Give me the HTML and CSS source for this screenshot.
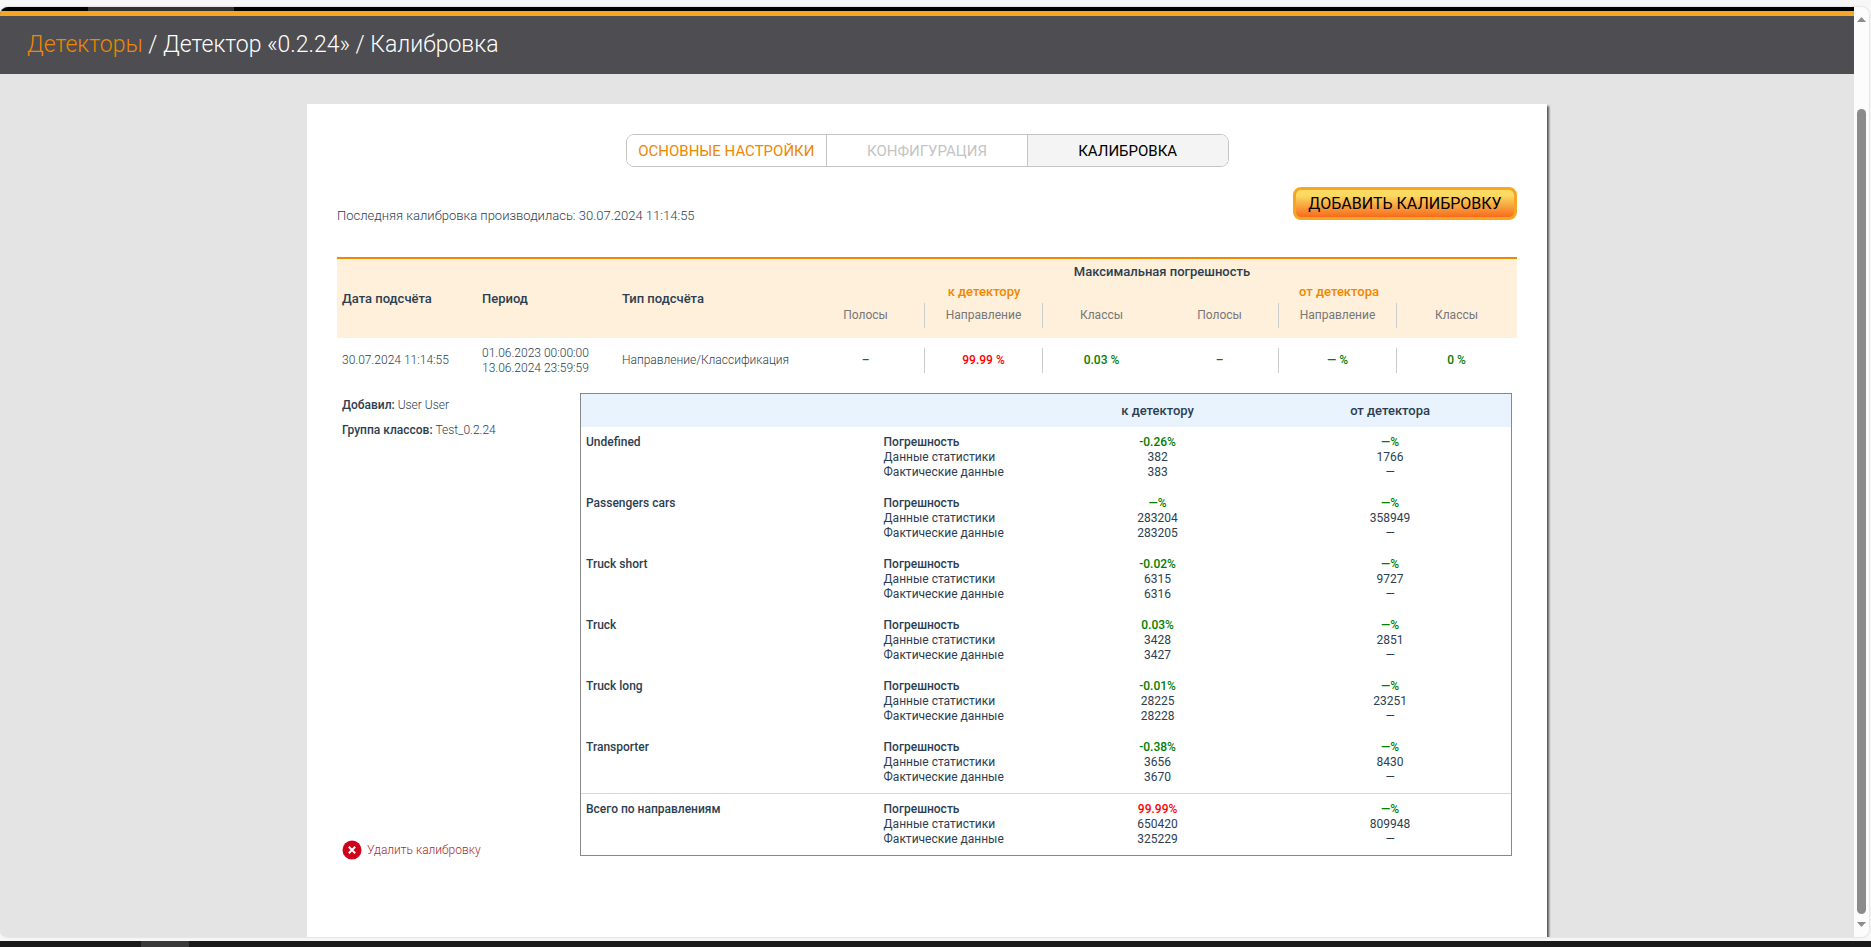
FILE: index.html
```html
<!DOCTYPE html>
<html lang="ru">
<head>
  <meta charset="UTF-8" />
  <title>Калибровка</title>
  <link rel="stylesheet" href="styles.css">
</head>
<body>
  <div class="window">
    <div class="page">
      <div class="menu-strip"><div class="menu-item"></div></div>
      <header class="header">
        <h1><a href="#">Детекторы</a> / Детектор «0.2.24» / Калибровка</h1>
      </header>

      <main class="card">
        <nav class="tabs">
          <button class="tab">Основные настройки</button>
          <button class="tab" disabled>Конфигурация</button>
          <button class="tab active">Калибровка</button>
        </nav>

        <div class="toolbar">
          <p class="last">Последняя калибровка производилась: 30.07.2024 11:14:55</p>
          <button class="btn-add">Добавить калибровку</button>
        </div>

        <table class="summary">
          <colgroup>
            <col class="col-date"><col class="col-date"><col class="col-type">
            <col class="col-err"><col class="col-err"><col class="col-err">
            <col class="col-err"><col class="col-err"><col>
          </colgroup>
          <thead>
            <tr class="row-title">
              <th rowspan="3" class="left">Дата подсчёта</th>
              <th rowspan="3" class="left">Период</th>
              <th rowspan="3" class="left">Тип подсчёта</th>
              <th colspan="6">Максимальная погрешность</th>
            </tr>
            <tr class="row-dir">
              <th colspan="3">к детектору</th>
              <th colspan="3">от детектора</th>
            </tr>
            <tr class="row-sub">
              <th><div class="cell line">Полосы</div></th>
              <th><div class="cell line">Направление</div></th>
              <th><div class="cell">Классы</div></th>
              <th><div class="cell line">Полосы</div></th>
              <th><div class="cell line">Направление</div></th>
              <th><div class="cell">Классы</div></th>
            </tr>
          </thead>
          <tbody>
            <tr>
              <td class="left">30.07.2024 11:14:55</td>
              <td class="left">01.06.2023 00:00:00<br>13.06.2024 23:59:59</td>
              <td class="left">Направление/Классификация</td>
              <td><div class="cell line good">–</div></td>
              <td><div class="cell line bad">99.99 %</div></td>
              <td><div class="cell good">0.03 %</div></td>
              <td><div class="cell line good">–</div></td>
              <td><div class="cell line good">— %</div></td>
              <td><div class="cell good">0 %</div></td>
            </tr>
          </tbody>
        </table>

        <div class="details">
          <div class="info">
            <p><b>Добавил:</b> User User</p>
            <p><b>Группа классов:</b> Test_0.2.24</p>
            <button class="btn-delete">
              <svg width="20" height="20" viewBox="0 0 20 20">
                <circle cx="10" cy="10" r="9.5" fill="#d0021b" />
                <path d="M6.8 6.8 L13.2 13.2 M13.2 6.8 L6.8 13.2" stroke="#fff" stroke-width="2" />
              </svg>
              <span>Удалить калибровку</span>
            </button>
          </div>

          <table class="classes">
            <colgroup>
              <col class="col-name"><col class="col-label"><col class="col-to"><col class="col-from">
            </colgroup>
            <thead>
              <tr><th></th><th></th><th>к детектору</th><th>от детектора</th></tr>
            </thead>
            <tbody>
              <tr>
                <th>Undefined</th>
                <td><b>Погрешность</b><br>Данные статистики<br>Фактические данные</td>
                <td><b class="good">-0.26%</b><br>382<br>383</td>
                <td><b class="good">—%</b><br>1766<br>—</td>
              </tr>
              <tr>
                <th>Passengers cars</th>
                <td><b>Погрешность</b><br>Данные статистики<br>Фактические данные</td>
                <td><b class="good">—%</b><br>283204<br>283205</td>
                <td><b class="good">—%</b><br>358949<br>—</td>
              </tr>
              <tr>
                <th>Truck short</th>
                <td><b>Погрешность</b><br>Данные статистики<br>Фактические данные</td>
                <td><b class="good">-0.02%</b><br>6315<br>6316</td>
                <td><b class="good">—%</b><br>9727<br>—</td>
              </tr>
              <tr>
                <th>Truck</th>
                <td><b>Погрешность</b><br>Данные статистики<br>Фактические данные</td>
                <td><b class="good">0.03%</b><br>3428<br>3427</td>
                <td><b class="good">—%</b><br>2851<br>—</td>
              </tr>
              <tr>
                <th>Truck long</th>
                <td><b>Погрешность</b><br>Данные статистики<br>Фактические данные</td>
                <td><b class="good">-0.01%</b><br>28225<br>28228</td>
                <td><b class="good">—%</b><br>23251<br>—</td>
              </tr>
              <tr>
                <th>Transporter</th>
                <td><b>Погрешность</b><br>Данные статистики<br>Фактические данные</td>
                <td><b class="good">-0.38%</b><br>3656<br>3670</td>
                <td><b class="good">—%</b><br>8430<br>—</td>
              </tr>
            </tbody>
            <tfoot>
              <tr>
                <th>Всего по направлениям</th>
                <td><b>Погрешность</b><br>Данные статистики<br>Фактические данные</td>
                <td><b class="bad">99.99%</b><br>650420<br>325229</td>
                <td><b class="good">—%</b><br>809948<br>—</td>
              </tr>
            </tfoot>
          </table>
        </div>
      </main>
    </div>

    <div class="scrollbar">
      <svg width="9" height="5" viewBox="0 0 9 5"><path d="M0 5 L4.5 0 L9 5 Z" fill="#8b8b8b" /></svg>
      <div class="thumb"></div>
      <svg width="9" height="5" viewBox="0 0 9 5"><path d="M0 0 L4.5 5 L9 0 Z" fill="#8b8b8b" /></svg>
    </div>
  </div>
  <div class="taskbar"><div class="task"></div></div>
</body>
</html>
```

FILE: styles.css
```css
* {
  box-sizing: border-box;
}
body {
  margin: 0;
  height: 100vh;
  display: flex;
  flex-direction: column;
  overflow: hidden;
  background: #f7f7f7;
  font-family: Roboto, "Liberation Sans", sans-serif;
  font-size: 12px;
  font-weight: 300;
  line-height: 15px;
  color: #2c3e50;
}
p, h1 {
  margin: 0;
}
b, th {
  font-weight: 500;
}
button {
  font-family: inherit;
  cursor: pointer;
}

/* window */
.window {
  flex: 1;
  min-height: 0;
  display: flex;
  margin: 7px 2px 4px 0;
  border-radius: 8px;
  overflow: hidden;
  box-shadow: 0 0 2px #bbb;
}
.page {
  flex: 1;
  overflow: hidden;
  background: #e4e4e4;
}
.scrollbar {
  width: 15px;
  padding: 10px 3px;
  display: flex;
  flex-direction: column;
  align-items: center;
  background: #fcfcfc;
}
.thumb {
  flex: 1;
  width: 9px;
  margin: 87px 0 8px;
  border-radius: 5px;
  background: #8b8b8b;
}
.taskbar {
  height: 6px;
  padding-left: 141px;
  background: #1b1b1b;
}
.task {
  width: 48px;
  height: 6px;
  background: #3a3a3a;
}

/* header */
.menu-strip {
  height: 4px;
  padding-left: 88px;
  background: #000;
}
.menu-item {
  width: 146px;
  height: 4px;
  background: #333;
}
.header {
  height: 63px;
  padding: 0 27px;
  display: flex;
  align-items: center;
  border-top: 5px solid #f5a623;
  background: #4d4d52;
}
h1 {
  font-size: 23px;
  line-height: 28px;
  font-weight: 300;
  color: #fff;
}
h1 a {
  color: #ef8700;
  text-decoration: none;
}

/* card */
.card {
  width: 1240px;
  max-width: 100%;
  min-height: 900px;
  margin: 30px auto 0;
  padding: 30px;
  background: #fff;
  box-shadow: 2px 2px 2px #555;
}
.tabs {
  display: flex;
  width: 603px;
  margin: 0 auto 20px;
  border: 1px solid #c4c4c4;
  border-radius: 8px;
  overflow: hidden;
}
.tab {
  flex: 1;
  height: 31px;
  padding: 0;
  border: none;
  border-right: 1px solid #c4c4c4;
  background: #fff;
  font-size: 15px;
  font-weight: 400;
  text-transform: uppercase;
  white-space: nowrap;
  color: #ef8700;
}
.tab:last-child {
  border-right: none;
}
.tab:disabled {
  color: #c4c4c4;
}
.tab.active {
  background: #f4f4f4;
  color: #000;
}
.toolbar {
  display: flex;
  justify-content: space-between;
  align-items: flex-start;
  height: 70px;
}
.last {
  padding-top: 19px;
  font-size: 13px;
  line-height: 20px;
}
.btn-add {
  width: 224px;
  height: 33px;
  padding: 0;
  border: 3px solid #f5a623;
  border-radius: 8px;
  background: linear-gradient(#fbda61 20%, #f76b1c);
  font-size: 16px;
  font-weight: 400;
  text-transform: uppercase;
  color: #000;
}

/* summary table */
table {
  border-collapse: separate;
  border-spacing: 0;
  table-layout: fixed;
}
.summary {
  width: 100%;
  border-top: 2px solid #ef8700;
}
.col-date {
  width: 140px;
}
.col-type {
  width: 190px;
}
.col-err {
  width: 118px;
}
.summary th, .summary td {
  padding: 0;
  text-align: center;
}
.summary thead {
  background: #fff0dc;
  font-size: 13px;
}
.summary .left {
  padding: 0 5px;
  text-align: left;
}
.row-title {
  height: 24px;
}
.row-dir {
  height: 16px;
  color: #ef8700;
}
.summary .row-sub th {
  padding: 4px 0 10px;
  font-size: 12px;
  font-weight: 400;
  color: #777;
}
.summary tbody td {
  padding-top: 10px;
  padding-bottom: 10px;
}
.cell {
  height: 25px;
  line-height: 25px;
  border-right: 1px solid transparent;
}
.cell.line {
  border-color: #ccc;
}
.good {
  font-weight: 500;
  color: green;
}
.bad {
  font-weight: 500;
  color: red;
}

/* details */
.details {
  display: flex;
  padding: 10px 5px 0;
}
.info {
  width: 238px;
  display: flex;
  flex-direction: column;
}
.info p {
  padding: 5px 0;
}
.btn-delete {
  display: flex;
  align-items: center;
  gap: 5px;
  margin: auto 0 -4px;
  padding: 0;
  border: none;
  background: none;
  font-size: 12px;
  font-weight: 300;
  color: brown;
}
.classes {
  flex: 1;
  border: 1px solid #888;
  font-weight: 400;
}
.col-name {
  width: 32%;
}
.col-label {
  width: 18%;
}
.col-to {
  width: 24%;
}
.classes thead th {
  height: 33px;
  background: #e8f3fe;
  font-size: 13px;
}
.classes tbody th, .classes tbody td,
.classes tfoot th, .classes tfoot td {
  padding: 8px 5px;
  vertical-align: top;
  text-align: center;
}
.classes tbody th, .classes tfoot th,
.classes tbody td:nth-child(2), .classes tfoot td:nth-child(2) {
  text-align: left;
}
.classes tfoot th, .classes tfoot td {
  border-top: 1px solid #d8d8d8;
}
```
